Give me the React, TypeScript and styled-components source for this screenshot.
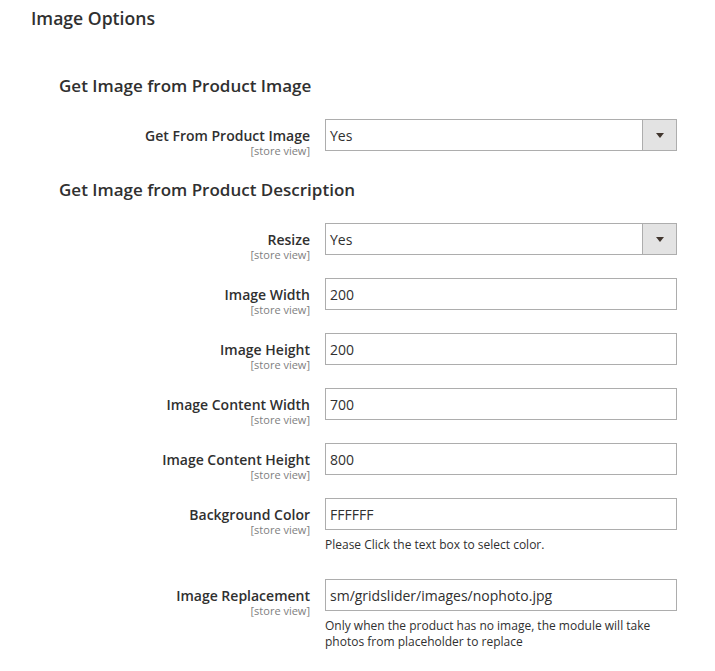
import styled, { createGlobalStyle } from 'styled-components';

const GlobalStyle = createGlobalStyle`
  body {
    margin: 0;
    background: #fff;
    font-family: "Open Sans", "Liberation Sans", sans-serif;
    color: #303030;
  }
`;

const Page = styled.div`
  width: 715px;
  padding: 6px 38px 0 31px;
  box-sizing: border-box;
`;

const Title = styled.h2`
  margin: 0;
  font-size: 17.6px;
  font-weight: 600;
  line-height: 24px;
  color: #303030;
`;

const Fieldset = styled.div<{ $first?: boolean }>`
  margin-left: 28px;
  padding-top: ${(p) => (p.$first ? '44px' : '0')};
`;

const Legend = styled.h3`
  margin: 0 0 21px;
  font-size: 17px;
  font-weight: 600;
  line-height: 24px;
  color: #303030;
`;

const Row = styled.div<{ $gap?: number }>`
  display: grid;
  grid-template-columns: 251px 352px;
  column-gap: 15px;
  align-items: start;
  margin-bottom: ${(p) => p.$gap ?? 23}px;
`;

const LabelCol = styled.div`
  height: 32px;
  text-align: right;
  padding-top: 9px;
  box-sizing: border-box;
  overflow: visible;
`;

const LabelText = styled.div`
  font-size: 14px;
  font-weight: 600;
  line-height: 16px;
  color: #303030;
`;

const Scope = styled.div`
  font-size: 11px;
  line-height: 13px;
  color: #808080;
`;

const Control = styled.div``;

const TextInput = styled.div`
  height: 32px;
  box-sizing: border-box;
  border: 1px solid #adadad;
  background: #fff;
  padding: 0 4px;
  display: flex;
  align-items: center;
  font-size: 14px;
  color: #303030;
`;

const SelectBox = styled.div`
  height: 32px;
  box-sizing: border-box;
  border: 1px solid #adadad;
  background: #fff;
  display: flex;
  align-items: stretch;
  font-size: 14px;
  color: #303030;
`;

const SelectValue = styled.div`
  flex: 1;
  display: flex;
  align-items: center;
  padding: 0 4px;
`;

const SelectButton = styled.div`
  width: 33px;
  border-left: 1px solid #adadad;
  background: #e3e3e3;
  display: flex;
  align-items: center;
  justify-content: center;
`;

const Arrow = styled.span`
  width: 0;
  height: 0;
  border-left: 4px solid transparent;
  border-right: 4px solid transparent;
  border-top: 5px solid #41362f;
  margin-top: 1px;
`;

const Note = styled.div`
  margin-top: 7px;
  font-size: 12px;
  line-height: 16px;
  color: #303030;
`;

type Field = {
  label: string;
  value: string;
  select?: boolean;
  note?: string;
};

const productDesc: Field[] = [
  { label: 'Resize', value: 'Yes', select: true },
  { label: 'Image Width', value: '200' },
  { label: 'Image Height', value: '200' },
  { label: 'Image Content Width', value: '700' },
  { label: 'Image Content Height', value: '800' },
  { label: 'Background Color', value: 'FFFFFF', note: 'Please Click the text box to select color.' },
  {
    label: 'Image Replacement',
    value: 'sm/gridslider/images/nophoto.jpg',
    note: 'Only when the product has no image, the module will take photos from placeholder to replace',
  },
];

function FieldRow({ field, gap }: { field: Field; gap?: number }) {
  return (
    <Row $gap={gap}>
      <LabelCol>
        <LabelText>{field.label}</LabelText>
        <Scope>[store view]</Scope>
      </LabelCol>
      <Control>
        {field.select ? (
          <SelectBox>
            <SelectValue>{field.value}</SelectValue>
            <SelectButton>
              <Arrow />
            </SelectButton>
          </SelectBox>
        ) : (
          <TextInput>{field.value}</TextInput>
        )}
        {field.note && <Note>{field.note}</Note>}
      </Control>
    </Row>
  );
}

export default function App() {
  return (
    <>
      <GlobalStyle />
      <Page>
        <Title>Image Options</Title>
        <Fieldset $first>
          <Legend>Get Image from Product Image</Legend>
          <FieldRow field={{ label: 'Get From Product Image', value: 'Yes', select: true }} gap={27} />
        </Fieldset>
        <Fieldset>
          <Legend>Get Image from Product Description</Legend>
          {productDesc.map((f) => (
            <FieldRow key={f.label} field={f} gap={f.note ? 26 : 23} />
          ))}
        </Fieldset>
      </Page>
    </>
  );
}
